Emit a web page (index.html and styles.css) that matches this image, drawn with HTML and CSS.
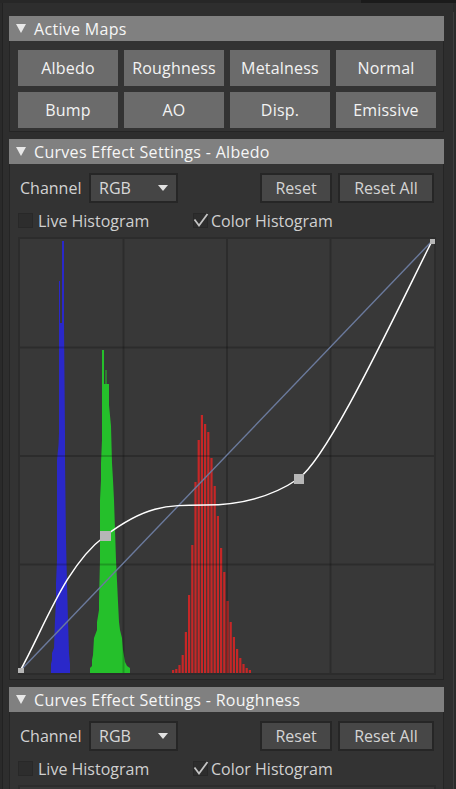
FILE: index.html
```html
<!DOCTYPE html>
<html>
<head>
<meta charset="utf-8">
<link rel="stylesheet" href="styles.css">
</head>
<body>
<div class="topbar"><div class="tb-left"></div><div class="tb-right"></div></div>
<div class="main">
  <div class="col">
    <section class="sec">
      <div class="hdr"><span class="tri"></span>Active Maps</div>
      <div class="body maps">
        <button class="map">Albedo</button>
        <button class="map">Roughness</button>
        <button class="map">Metalness</button>
        <button class="map">Normal</button>
        <button class="map">Bump</button>
        <button class="map">AO</button>
        <button class="map">Disp.</button>
        <button class="map">Emissive</button>
      </div>
    </section>

    <section class="sec">
      <div class="hdr"><span class="tri"></span>Curves Effect Settings - Albedo</div>
      <div class="body curves">
        <div class="ctrl">
          <span class="lbl">Channel</span>
          <div class="select"><span>RGB</span><span class="dd"></span></div>
          <div class="spacer"></div>
          <button class="btn reset">Reset</button>
          <button class="btn resetall">Reset All</button>
        </div>
        <div class="checks">
          <label class="chk c1"><span class="box"></span>Live Histogram</label>
          <label class="chk"><span class="box on"><svg class="tick" viewBox="0 0 15 15" width="15" height="15"><path d="M1.5 6.5 L6 12.5 L14.5 1" fill="none" stroke="#c4c4c4" stroke-width="1.8"/></svg></span>Color Histogram</label>
        </div>
        <svg class="graph" viewBox="18 237 418 438" width="418" height="438">
          <rect x="18" y="237" width="418" height="438" fill="#2c2c2c"/>
          <rect x="20" y="239" width="414" height="434" fill="#383838"/>
          <polygon fill="#2a28c9" points="51,673 51,664 52,660 52,653 54,648 55,620 56,600 56,583 57,560 57,460 58.5,445 59,433 59,323 59,281 60,281 60,323 62,323 62,241 64,241 64,323 64.5,380 65,433 65,460 66,540 67,583 68,620 69,653 70,664 70,673"/>
          <polygon fill="#25c02b" points="90,673 90,668 92,666 92,660 93,655 94,638 97,630 97,622 99,610 99,602 100,560 100,500 101,480 101,463 102,440 102,426 102,350 104,350 104,384 105.5,384 105.5,370 106.5,370 106.5,384 109,384 109,405 111,426 112,463 113,480 114,500 116,560 118,602 119,622 120,630 122,638 123,650 125,662 127,666 130,668 130,673"/>
          <g fill="#c62727">
            <rect x="172" y="670" width="2.2" height="3"/>
            <rect x="175.2" y="669" width="2.2" height="4"/>
            <rect x="178.4" y="665" width="2.2" height="8"/>
            <rect x="181.6" y="655" width="2.2" height="18"/>
            <rect x="184.8" y="632" width="2.2" height="41"/>
            <rect x="188" y="595" width="2.2" height="78"/>
            <rect x="191.2" y="545" width="2.2" height="128"/>
            <rect x="194.4" y="482" width="2.2" height="191"/>
            <rect x="197.6" y="440" width="2.2" height="233"/>
            <rect x="200.8" y="415" width="2.2" height="258"/>
            <rect x="204" y="424" width="2.2" height="249"/>
            <rect x="207.2" y="432" width="2.2" height="241"/>
            <rect x="210.4" y="458" width="2.2" height="215"/>
            <rect x="213.6" y="486" width="2.2" height="187"/>
            <rect x="216.8" y="516" width="2.2" height="157"/>
            <rect x="220" y="548" width="2.2" height="125"/>
            <rect x="223.2" y="572" width="2.2" height="101"/>
            <rect x="226.4" y="601" width="2.2" height="72"/>
            <rect x="229.6" y="622" width="2.2" height="51"/>
            <rect x="232.8" y="637" width="2.2" height="36"/>
            <rect x="236" y="649" width="2.2" height="24"/>
            <rect x="239.2" y="658" width="2.2" height="15"/>
            <rect x="242.4" y="664" width="2.2" height="9"/>
            <rect x="245.6" y="668" width="2.2" height="5"/>
            <rect x="248.8" y="670" width="2.2" height="3"/>
          </g>
          <g stroke="rgba(0,0,0,0.2)" stroke-width="2">
            <line x1="123.5" y1="239" x2="123.5" y2="673"/>
            <line x1="227" y1="239" x2="227" y2="673"/>
            <line x1="330.5" y1="239" x2="330.5" y2="673"/>
            <line x1="20" y1="347.5" x2="434" y2="347.5"/>
            <line x1="20" y1="456" x2="434" y2="456"/>
            <line x1="20" y1="564.5" x2="434" y2="564.5"/>
          </g>
          <line x1="20" y1="671" x2="432" y2="241" stroke="#6b7a9d" stroke-width="1.4"/>
          <path d="M20,671 C45,626 65,566 105,536 C145,506 165,505 205,505 C245,505 276,494 298,479 C328,458 392,321 432,241" fill="none" stroke="#ffffff" stroke-width="1.5"/>
          <g fill="#b6b6b6">
            <rect x="18" y="668" width="6" height="5"/>
            <rect x="100" y="531" width="11" height="10"/>
            <rect x="294" y="474" width="10" height="10"/>
            <rect x="430" y="239" width="5" height="5"/>
          </g>
        </svg>
      </div>
    </section>

    <section class="sec">
      <div class="hdr"><span class="tri"></span>Curves Effect Settings - Roughness</div>
      <div class="body curves">
        <div class="ctrl">
          <span class="lbl">Channel</span>
          <div class="select"><span>RGB</span><span class="dd"></span></div>
          <div class="spacer"></div>
          <button class="btn reset">Reset</button>
          <button class="btn resetall">Reset All</button>
        </div>
        <div class="checks">
          <label class="chk c1"><span class="box"></span>Live Histogram</label>
          <label class="chk"><span class="box on"><svg class="tick" viewBox="0 0 15 15" width="15" height="15"><path d="M1.5 6.5 L6 12.5 L14.5 1" fill="none" stroke="#c4c4c4" stroke-width="1.8"/></svg></span>Color Histogram</label>
        </div>
        <div class="graph-stub"></div>
      </div>
    </section>
  </div>
  <div class="scroll"></div>
</div>
</body>
</html>
```

FILE: styles.css
```css
html, body {
  margin: 0;
  height: 789px;
  overflow: hidden;
}
body {
  background: #2a2a2a;
  font-family: "Open Sans", "Noto Sans", sans-serif;
  font-size: 16px;
}
.topbar {
  display: flex;
  height: 3px;
}
.tb-left { flex: 1; background: #272727; }
.tb-right { width: 95px; background: #1b1b1b; }

.main { display: flex; }
.col {
  margin-left: 2px;
  width: 451px;
  height: 786px;
  overflow: hidden;
  box-sizing: border-box;
  border-left: 1px solid #222;
  background: #2e2e2e;
  padding: 13px 0 0 6px;
}
.scroll {
  flex: 1;
  margin-top: 9px;
  border-left: 1px solid #3e3e3e;
  background: #2a2a2a;
}

.sec {
  width: 435px;
  margin-bottom: 7px;
}
.hdr {
  height: 25px;
  background: #808080;
  color: #f6f6f6;
  display: flex;
  align-items: center;
  padding-left: 7px;
  font-size: 16px;
  letter-spacing: 0.3px;
  white-space: nowrap;
}
.tri {
  width: 0;
  height: 0;
  border-left: 5px solid transparent;
  border-right: 5px solid transparent;
  border-top: 9px solid #e8e8e8;
  margin-right: 8px;
}
.body {
  border: 1px solid #252525;
  border-top: 0;
  background: #333333;
}
.maps {
  display: grid;
  grid-template-columns: repeat(4, 100px);
  gap: 6px;
  padding: 9px 7px 3px 8px;
}
.map {
  height: 36px;
  border: 0;
  padding: 0;
  background: #6b6b6b;
  color: #f3f3f3;
  font: inherit;
  letter-spacing: 0.2px;
}
.curves {
  padding: 9px 7px 4px 8px;
}
.ctrl {
  display: flex;
  align-items: center;
  height: 30px;
}
.lbl {
  width: 71px;
  padding-left: 2px;
  box-sizing: border-box;
  color: #d2d2d2;
}
.select {
  width: 89px;
  height: 30px;
  box-sizing: border-box;
  border: 2px solid #262626;
  background: #454545;
  color: #d8d8d8;
  display: flex;
  align-items: center;
  justify-content: space-between;
  padding: 0 8px 0 8px;
}
.dd {
  width: 0;
  height: 0;
  border-left: 5px solid transparent;
  border-right: 5px solid transparent;
  border-top: 6px solid #e2e2e2;
}
.spacer { flex: 1; }
.btn {
  height: 30px;
  box-sizing: border-box;
  border: 2px solid #262626;
  background: #474747;
  color: #d4d4d4;
  font: inherit;
  padding: 0;
}
.reset { width: 72px; margin-right: 6px; }
.resetall { width: 96px; margin-right: 2px; }

.checks {
  display: flex;
  align-items: center;
  height: 15px;
  margin-top: 10px;
}
.chk {
  display: flex;
  align-items: center;
  color: #d0d0d0;
  white-space: nowrap;
}
.c1 { width: 175px; }
.box {
  width: 15px;
  height: 15px;
  box-sizing: border-box;
  background: #2d2d2d;
  border: 1px solid #282828;
  margin-right: 5px;
  flex: none;
}
.box.on {
  margin-right: 3px;
}
.tick {
  display: block;
  margin: -1px;
  overflow: visible;
}
.graph {
  display: block;
  margin-top: 9px;
}
.graph-stub {
  margin-top: 9px;
  height: 40px;
  background: #383838;
  border: 2px solid #2c2c2c;
  width: 414px;
}
```
